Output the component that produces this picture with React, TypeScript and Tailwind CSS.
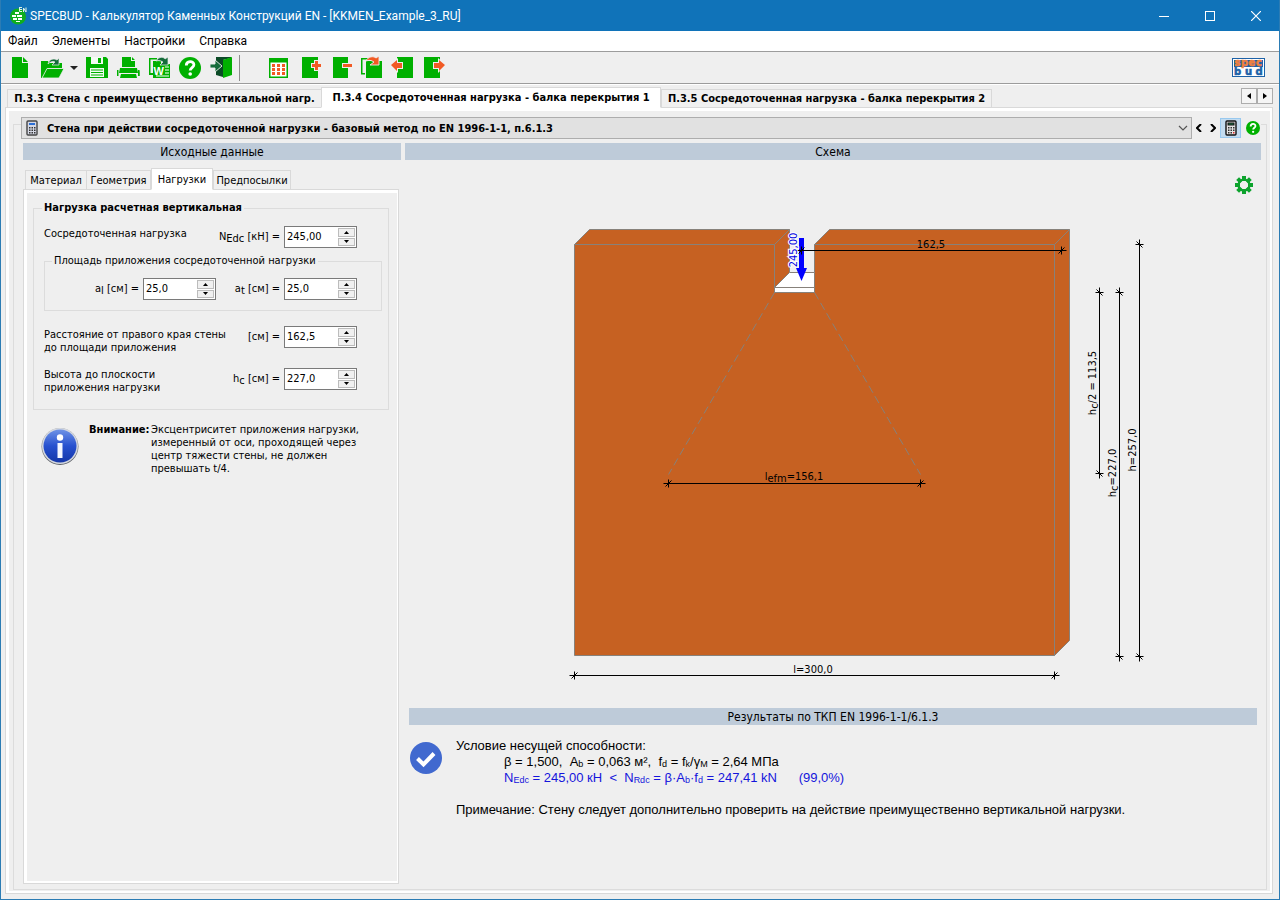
import type { ReactNode } from "react";
import { clsx } from "clsx";

const GREEN = "#00b000";
const DARK = "#156b3a";
const ORANGE = "#f15a24";

const menu = ["Файл", "Элементы", "Настройки", "Справка"];

function AppIcon() {
  return (
    <svg width="18" height="18" viewBox="0 0 18 18" aria-hidden="true">
      <circle cx="9" cy="9.500" r="8" fill="#0fae1e" />
      <path d="M6 5h4v2H6zM3 8h4v2H3zM8 8h5v2H8zM4 11h4v2H4zM9 11h4v2H9zM7 14h4v1H7z" fill="#fff" />
      <path d="M10 .5h3M10.500 .5v4H13M10 2.500h3M14.500 5V1l2.500 4V.5" stroke="#dff5e2" fill="none" />
    </svg>
  );
}

function ToolButton({ label, children }: { label: string; children: ReactNode }) {
  return (
    <button type="button" aria-label={label} className="h-6 w-[31px]">
      <svg width="31" height="24" viewBox="0 0 31 24">
        {children}
      </svg>
    </button>
  );
}

function Toolbar() {
  return (
    <div className="flex h-8 items-center border-b border-[#9c9c9c] pl-1 pr-[14px] shadow-[0_1px_0_#fff]">
      <ToolButton label="Новый">
        <path d="M7 1h10v6h6v15H7z" fill={GREEN} />
        <path d="M18 1l5 5h-5z" fill={GREEN} />
      </ToolButton>
      <ToolButton label="Открыть">
        <path d="M5 22V5h7l1 2h13v5H12L6 22z" fill={GREEN} />
        <path d="M11 12.500h17l-5 9.500H6z" fill={GREEN} stroke="#efefef" strokeWidth="0.8" />
        <path d="M12 8c1-5 6-6 9-4l2-2v7h-7l3-3c-3-1-5 0-7 2z" fill={DARK} stroke="#efefef" strokeWidth="0.7" />
      </ToolButton>
      <button type="button" aria-label="Последние файлы" className="h-6 w-[14px]">
        <svg width="14" height="24" viewBox="0 0 14 24">
          <path d="M3 10h8l-4 4z" fill="#222" />
        </svg>
      </button>
      <ToolButton label="Сохранить">
        <path d="M5 1h20l2 2v19H5z" fill={GREEN} />
        <path d="M10 1h12v7H10zM9 12h14v9H9z" fill="#f4fbf4" />
        <path d="M17 2h3v5h-3zM10 13.500h12v1H10zM10 16h12v1H10zM10 18.500h12v1H10z" fill={GREEN} />
      </ToolButton>
      <ToolButton label="Печать">
        <path d="M10 1h9v4h4v6H10zM20 1l3 3h-3z" fill={GREEN} />
        <path d="M8 12h17l1 5H7z" fill={GREEN} />
        <path d="M5 14l1 6H5zM27.500 14l-1.500 6h1.500zM9 18h15l1 4H8z" fill={GREEN} />
        <path d="M5 14h1.500v6H5zM26 14h1.500v6H26z" fill={GREEN} />
      </ToolButton>
      <ToolButton label="Экспорт в Word">
        <path d="M6 2h8v1.500H7.500V17H10v2H6z" fill={GREEN} />
        <path d="M10 5h8v3h9v14H10z" fill={GREEN} />
        <text x="10.500" y="18.500" fontSize="11" fontWeight="700" fontFamily="Liberation Sans, sans-serif" fill="#fff">W</text>
        <path d="M22 11h4M22 14h4M22 17h4M13 20h13" stroke="#fff" />
        <path d="M13 5c3-5 8-4 9-2l3-2v8h-8l3-3c-2-1-4-2-7-1z" fill={DARK} stroke="#efefef" strokeWidth="0.7" />
      </ToolButton>
      <ToolButton label="Помощь">
        <circle cx="16" cy="12" r="11" fill={GREEN} />
        <path d="M12.300 9.500c0-5 7.600-5 7.600-.7 0 2.700-3.700 2.900-3.700 5.700" fill="none" stroke="#fff" strokeWidth="2.800" />
        <circle cx="16.200" cy="18" r="1.800" fill="#fff" />
      </ToolButton>
      <ToolButton label="Выход">
        <path d="M11 1h15v1l-8 2v17l-7-2z" fill="#0b4a26" />
        <path d="M18 4l9-3v18l-9 3z" fill={GREEN} />
        <path d="M5 8h5V4l7 6-7 6v-4H5z" fill={DARK} stroke="#efefef" strokeWidth="0.9" />
      </ToolButton>
      <div className="ml-[3px] mr-[23px] h-[26px] w-px bg-[#8c8c8c]" />
      <ToolButton label="Таблица">
        <path d="M6 2h19v20H6z" fill={GREEN} />
        <path d="M7.500 6.500h16v14h-16z" fill="#fff" />
        <path d="M9 8h3v3H9zM14 8h3v3h-3zM19 8h3v3h-3zM9 12h3v3H9zM14 12h3v3h-3zM19 12h3v3h-3zM9 16h3v3H9zM14 16h3v3h-3zM19 16h3v3h-3z" fill={ORANGE} />
      </ToolButton>
      <ToolButton label="Добавить элемент">
        <path d="M8 1h16v21H8z" fill={GREEN} />
        <path d="M17 7h3V4h5v3h3v5h-3v3h-5v-3h-3z" fill="#efefef" />
        <path d="M18 8h3V5h3v3h3v3h-3v3h-3v-3h-3z" fill={ORANGE} />
      </ToolButton>
      <ToolButton label="Удалить элемент">
        <path d="M8 1h15v21H8z" fill={GREEN} />
        <path d="M17 7h11v5H17z" fill="#efefef" />
        <path d="M18 8h9v3h-9z" fill={ORANGE} />
      </ToolButton>
      <ToolButton label="Копировать элемент">
        <path d="M5 2h8v1.500H6.500V17H9v1.500H5z" fill={GREEN} />
        <path d="M10 5h16v17H10z" fill={GREEN} />
        <path d="M10 5c2-5 8-5 10-3l3-2v9h-9l4-3c-3-2-5-2-8-1z" fill={ORANGE} stroke="#efefef" strokeWidth="0.9" />
      </ToolButton>
      <ToolButton label="Переместить влево">
        <path d="M10 1h16v21H10z" fill={GREEN} />
        <path d="M3 9l8-7v4h5v7h-5v4z" fill="#efefef" />
        <path d="M4 9l6-5v3h5v5h-5v3z" fill={ORANGE} />
      </ToolButton>
      <ToolButton label="Переместить вправо">
        <path d="M6 1h16v21H6z" fill={GREEN} />
        <path d="M28 9l-8-7v4h-5v7h5v4z" fill="#efefef" />
        <path d="M27 9l-6-5v3h-5v5h5v3z" fill={ORANGE} />
      </ToolButton>
      <svg className="ml-auto" width="33" height="19" viewBox="0 0 33 19" role="img" aria-label="specbud">
        <rect x="0.500" y="0.500" width="32" height="18" fill="#fff" stroke="#1d62a8" />
        <rect x="2" y="2" width="29" height="7" fill="#1d62a8" />
        <g fontFamily="DejaVu Sans, sans-serif" fontWeight="700" textAnchor="middle" strokeWidth="0.6">
          <g fontSize="10" fill="#f08040" stroke="#f08040">
            <text x="5.500" y="8">s</text>
            <text x="12.500" y="8">p</text>
            <text x="20" y="8">e</text>
            <text x="27" y="8">c</text>
          </g>
          <g fontSize="10" fill="#1d62a8" stroke="#1d62a8">
            <text x="5.500" y="17">b</text>
            <text x="16.500" y="17">u</text>
            <text x="27" y="17">d</text>
          </g>
        </g>
      </svg>
    </div>
  );
}

function Calculator({ color }: { color?: boolean }) {
  return (
    <svg width="12" height="16" viewBox="0 0 12 16" aria-hidden="true">
      <rect x="1" y="1" width="10" height="14" rx="1" fill={color ? "#d5d8e4" : "#e4e4e4"} stroke={color ? "#444" : "#111"} strokeWidth="1.400" />
      <rect x="3" y="3" width="6" height="2" fill={color ? "#2b6fd6" : "#1f7a4a"} stroke={color ? "none" : "#111"} />
      <path d="M3 7h1.500v1.500H3zM5.500 7H7v1.500H5.500zM8 7h1.500v1.500H8zM3 9.500h1.500V11H3zM5.500 9.500H7V11H5.500zM8 9.500h1.500V11H8zM3 12h1.500v1.500H3zM5.500 12H7v1.500H5.500z" fill="#333" />
      <path d="M8 12h1.500v1.500H8z" fill={color ? "#333" : "#e03030"} />
    </svg>
  );
}

function Heading({ children }: { children: ReactNode }) {
  return <h2 className="h-[17px] bg-[#becbd9] text-center text-[12px] leading-[18px]">{children}</h2>;
}

function Sub({ children }: { children: ReactNode }) {
  return <span className="relative top-0.5">{children}</span>;
}

interface NumberFieldProps {
  id: string;
  symbol: ReactNode;
  value: string;
}

function NumberField({ id, symbol, value }: NumberFieldProps) {
  return (
    <div className="flex h-[22px] w-[141px] shrink-0 items-center justify-end gap-1">
      <label htmlFor={id} className="whitespace-nowrap">
        {symbol} =
      </label>
      <div className="flex h-[22px] w-[73px] border border-[#7a7a7a] bg-white p-px">
        <input id={id} defaultValue={value} className="w-0 flex-1 bg-transparent px-px outline-none" />
        <div className="flex w-[17px] flex-col gap-px">
          <button type="button" aria-label="Больше" className="flex flex-1 items-center justify-center border border-[#bcbcbc] bg-[#f0f0f0]">
            <svg width="5" height="3" viewBox="0 0 5 3"><path d="M0 3l2.500-3L5 3z" /></svg>
          </button>
          <button type="button" aria-label="Меньше" className="flex flex-1 items-center justify-center border border-[#bcbcbc] bg-[#f0f0f0]">
            <svg width="5" height="3" viewBox="0 0 5 3"><path d="M0 0h5L2.500 3z" /></svg>
          </button>
        </div>
      </div>
    </div>
  );
}

function InfoIcon() {
  return (
    <svg width="40" height="40" viewBox="0 0 40 40" className="shrink-0" aria-hidden="true">
      <defs>
        <linearGradient id="info" x1="0" y1="0" x2="0" y2="1">
          <stop offset="0" stopColor="#6f93e6" />
          <stop offset="0.500" stopColor="#2650cf" />
          <stop offset="1" stopColor="#1436a8" />
        </linearGradient>
        <linearGradient id="ring" x1="0" y1="0" x2="0" y2="1">
          <stop offset="0" stopColor="#9c9c9c" />
          <stop offset="1" stopColor="#5c6066" />
        </linearGradient>
      </defs>
      <circle cx="20" cy="20.500" r="18.500" fill="url(#ring)" />
      <circle cx="20" cy="20" r="18" fill="#d4d8e0" />
      <circle cx="20" cy="20" r="16.500" fill="url(#info)" />
      <circle cx="20" cy="11.500" r="3.200" fill="#fff" />
      <path d="M17.500 17h5v15h-5z" fill="#f4f6ff" />
    </svg>
  );
}

const tabs = ["Материал", "Геометрия", "Нагрузки", "Предпосылки"];
const tabWidths = ["w-[61px]", "w-[65px]", "w-[62px]", "w-[78px]"];

function InputPanel() {
  return (
    <section className="flex w-[378px] shrink-0 flex-col">
      <Heading>Исходные данные</Heading>
      <div role="tablist" className="flex h-[29px] items-end pl-0.5">
        {tabs.map((tab, i) => (
          <button
            key={tab}
            type="button"
            role="tab"
            aria-selected={i === 2}
            className={clsx(
              "flex shrink-0 justify-center border border-[#d9d9d9] whitespace-nowrap",
              tabWidths[i],
              i === 2 ? "relative -mb-px h-[22px] border-b-white bg-white pt-[3px]" : "h-[19px] border-b-0 bg-[#f0f0f0] pt-0.5",
              i === 0 && "border-r-0",
            )}
          >
            {tab}
          </button>
        ))}
      </div>
      <div role="tabpanel" className="mr-[2px] flex-1 border border-[#d9d9d9] bg-white pt-[3px] pr-px pb-[2px] pl-[3px]">
        <div className="h-full bg-[#efefef] pt-[7px] pr-2 pl-1.5">
          <fieldset className="border border-[#dcdcdc] pr-1.5 pb-[13px] pl-2.5">
            <legend className="-ml-0.5 px-0.5 text-[11px] leading-4 font-bold">Нагрузка расчетная вертикальная</legend>
            <div className="mt-[10px] flex items-start justify-between pr-[25px]">
              <span>Сосредоточенная нагрузка</span>
              <NumberField id="nedc" symbol={<>N<Sub>Edc</Sub> [кН]</>} value="245,00" />
            </div>
            <fieldset className="mt-[5px] border border-[#dcdcdc] pr-6 pb-[10px]">
              <legend className="ml-[7px] px-0.5 leading-4">Площадь приложения сосредоточенной нагрузки</legend>
              <div className="mt-[9px] flex justify-end">
                <NumberField id="al" symbol={<>a<Sub>l</Sub> [см]</>} value="25,0" />
                <NumberField id="at" symbol={<>a<Sub>t</Sub> [см]</>} value="25,0" />
              </div>
            </fieldset>
            <div className="mt-[15px] flex h-7 items-start justify-between pr-[25px]">
              <span className="pt-0.5 leading-[13px] whitespace-nowrap">
                Расстояние от правого края стены
                <br />
                до площади приложения
              </span>
              <div className="flex w-0 justify-end">
                <NumberField id="dist" symbol="[см]" value="162,5" />
              </div>
            </div>
            <div className="mt-[14px] flex h-7 items-start justify-between pr-[25px]">
              <span className="leading-[13px] whitespace-nowrap">
                Высота до плоскости
                <br />
                приложения нагрузки
              </span>
              <NumberField id="hc" symbol={<>h<Sub>c</Sub> [см]</>} value="227,0" />
            </div>
          </fieldset>
          <div className="flex items-start pt-[13px] pl-[7px] leading-[13px]">
            <div className="pt-[3px]">
              <InfoIcon />
            </div>
            <p className="ml-[9px] w-[62px] shrink-0 font-bold">Внимание:</p>
            <p className="whitespace-nowrap">
              Эксцентриситет приложения нагрузки,
              <br />
              измеренный от оси, проходящей через
              <br />
              центр тяжести стены, не должен
              <br />
              превышать t/4.
            </p>
          </div>
        </div>
      </div>
    </section>
  );
}

// Dimension end mark: a cross with an oblique stroke
function Tick({ x, y, vertical }: { x: number; y: number; vertical?: boolean }) {
  return (
    <path
      d={vertical ? `M${x - 4} ${y}h8M${x} ${y - 5}v10M${x - 3} ${y - 3}l6 6` : `M${x - 5} ${y}h10M${x} ${y - 4}v8M${x - 3} ${y + 3}l6 -6`}
      stroke="#000"
      fill="none"
    />
  );
}

function HDim({ x1, x2, y }: { x1: number; x2: number; y: number }) {
  return (
    <g>
      <path d={`M${x1} ${y}H${x2}`} stroke="#000" />
      <Tick x={x1} y={y} />
      <Tick x={x2} y={y} />
    </g>
  );
}

function VDim({ x, y1, y2 }: { x: number; y1: number; y2: number }) {
  return (
    <g>
      <path d={`M${x} ${y1}V${y2}`} stroke="#000" />
      <Tick x={x} y={y1} vertical />
      <Tick x={x} y={y2} vertical />
    </g>
  );
}

function Scheme() {
  return (
    <svg viewBox="405 160 856 548" className="block w-full" fontSize="11" role="img" aria-label="Схема">
      <g stroke="#87817a">
        <path d="M574.500 244.500l15-15h200v43l-15 15v5h40v-48l15-15h240v411l-15 15h-480z" fill="#c66122" />
        <path d="M774.500 287.500l15-15h25v20h-40z" fill="#fff" />
        <path d="M774.500 287.500h40M574.500 244.500h200v43M774.500 244.500l15-15M814.500 244.500h240v411M1054.500 244.500l15-15" fill="none" />
        <path d="M774.500 292.500l-106 182M814.500 292.500l106 182" fill="none" strokeDasharray="8 4" />
      </g>
      <path d="M799 238h5v30h3l-5.500 13-5.500-13h3z" fill="#00f" />
      <HDim x1={801.5} x2={1061.5} y={250.5} />
      <HDim x1={668.5} x2={920.5} y={483.5} />
      <HDim x1={574.5} x2={1054.5} y={675.5} />
      <VDim x={1099.5} y1={292.5} y2={473.5} />
      <VDim x={1119.5} y1={292.5} y2={656.5} />
      <VDim x={1139.5} y1={244.5} y2={656.5} />
      <g textAnchor="middle">
        <text x="931" y="248">162,5</text>
        <text x="794" y="480">
          l<tspan dy="2">efm</tspan>
          <tspan dy="-2">=156,1</tspan>
        </text>
        <text x="813" y="673">l=300,0</text>
        <text transform="translate(797 250) rotate(-90)" fill="#0000e0" stroke="#fff" strokeWidth="2" paintOrder="stroke">245,00</text>
        <text transform="translate(1096 383) rotate(-90)">
          h<tspan dy="2">c</tspan>
          <tspan dy="-2">/2 = 113,5</tspan>
        </text>
        <text transform="translate(1116 473) rotate(-90)">
          h<tspan dy="2">c</tspan>
          <tspan dy="-2">=227,0</tspan>
        </text>
        <text transform="translate(1136 450) rotate(-90)">h=257,0</text>
      </g>
    </svg>
  );
}

function ResultSub({ children }: { children: ReactNode }) {
  return <sub className="bottom-[-1px] text-[9px]">{children}</sub>;
}

function Results() {
  return (
    <section className="px-1">
      <Heading>Результаты по ТКП EN 1996-1-1/6.1.3</Heading>
      <div className="flex items-start gap-[14px] pt-[13px] pl-px font-['Liberation_Sans',sans-serif] text-[13px] leading-4">
        <svg width="32" height="32" viewBox="0 0 32 32" className="mt-1 shrink-0" aria-hidden="true">
          <circle cx="16" cy="16" r="16" fill="#4169cf" />
          <path d="M7.500 16.500l6 6L24 11.500" fill="none" stroke="#fff" strokeWidth="4" />
        </svg>
        <div>
          <p>Условие несущей способности:</p>
          <p className="pl-12 whitespace-pre">
            β = 1,500,{"  "}A<ResultSub>b</ResultSub> = 0,063 м²,{"  "}f<ResultSub>d</ResultSub> = f<ResultSub>k</ResultSub>/γ
            <ResultSub>M</ResultSub> = 2,64 МПа
          </p>
          <p className="pl-12 whitespace-pre text-[#1414dc]">
            N<ResultSub>Edc</ResultSub> = 245,00 кН{"  "}&lt;{"  "}N<ResultSub>Rdc</ResultSub> = β·A<ResultSub>b</ResultSub>·f
            <ResultSub>d</ResultSub> = 247,41 kN{"     "} (99,0%)
          </p>
          <p className="mt-4">Примечание: Стену следует дополнительно проверить на действие преимущественно вертикальной нагрузки.</p>
        </div>
      </div>
    </section>
  );
}

function GearIcon() {
  return (
    <svg width="18" height="18" viewBox="0 0 18 18" aria-hidden="true">
      {[0, 45, 90, 135, 180, 225, 270, 315].map((a) => (
        <rect key={a} x="7" y="0" width="4" height="5" fill="#0da32d" transform={`rotate(${a} 9 9)`} />
      ))}
      <circle cx="9" cy="9" r="5.500" fill="none" stroke="#0da32d" strokeWidth="2.200" />
    </svg>
  );
}

const docTabs = [
  { title: "П.3.3 Стена с преимущественно вертикальной нагр.", width: "w-[314px]" },
  { title: "П.3.4 Сосредоточенная нагрузка - балка перекрытия 1", width: "w-[340px]" },
  { title: "П.3.5 Сосредоточенная нагрузка - балка перекрытия 2", width: "w-[331px]" },
];

export default function App() {
  return (
    <div className="flex min-h-screen flex-col border-x border-b border-[#2c7cb4] bg-[#efefef] font-['DejaVu_Sans_Condensed','DejaVu_Sans',sans-serif] text-[11px] leading-4 text-black">
      <header className="flex h-[31px] items-center bg-[#1073b9] pl-2 font-['Roboto',sans-serif] text-[12px] text-white">
        <AppIcon />
        <h1 className="ml-[3px] flex-1">SPECBUD - Калькулятор Каменных Конструкций EN - [KKMEN_Example_3_RU]</h1>
        <button type="button" aria-label="Свернуть" className="flex w-[46px] justify-center">
          <svg width="10" height="10"><path d="M0 5.500h10" stroke="#fff" /></svg>
        </button>
        <button type="button" aria-label="Развернуть" className="flex w-[46px] justify-center">
          <svg width="10" height="10"><rect x="0.500" y="0.500" width="9" height="9" fill="none" stroke="#fff" /></svg>
        </button>
        <button type="button" aria-label="Закрыть" className="flex w-[46px] justify-center">
          <svg width="10" height="10"><path d="M0 0l10 10M10 0L0 10" stroke="#fff" strokeWidth="1.200" /></svg>
        </button>
      </header>
      <nav className="flex h-[21px] items-center gap-[14px] border-b border-[#9c9c9c] bg-white pl-[7px] font-['Roboto',sans-serif] text-[12px]">
        {menu.map((m) => (
          <button key={m} type="button">{m}</button>
        ))}
      </nav>
      <Toolbar />

      <div className="flex flex-1 flex-col pt-[3px] pr-[6px] pb-[5px] pl-1">
        <div className="flex items-end pl-0.5">
          <div role="tablist" className="flex flex-1 items-end font-bold">
            {docTabs.map((t, i) => (
              <button
                key={t.title}
                type="button"
                role="tab"
                aria-selected={i === 1}
                className={clsx(
                  "border border-[#d9d9d9] whitespace-nowrap",
                  t.width,
                  i === 0 && "border-r-0",
                  i === 1 ? "relative -mb-px h-[21px] border-b-white bg-white" : "h-[18px] border-b-0 bg-[#f0f0f0]",
                )}
              >
                {t.title}
              </button>
            ))}
          </div>
          <div className="mb-[3px] flex">
            <button type="button" aria-label="Предыдущая вкладка" className="flex h-4 w-4 items-center justify-center border border-[#adadad] bg-[#f5f5f5]">
              <svg width="4" height="6"><path d="M4 0v6L0 3z" /></svg>
            </button>
            <button type="button" aria-label="Следующая вкладка" className="flex h-4 w-4 items-center justify-center border border-[#adadad] bg-[#f5f5f5]">
              <svg width="4" height="6"><path d="M0 0v6l4-3z" /></svg>
            </button>
          </div>
        </div>

        <main className="flex flex-1 flex-col border border-[#d9d9d9] bg-white pt-[3px] pr-[2px] pb-[2px] pl-[3px]">
          <div className="flex flex-1 flex-col bg-[#efefef] pr-[3px] pb-px pl-1">
            <div className="flex flex-1 flex-col pt-[13px]">
              <div className="flex flex-1 flex-col border border-[#dcdcdc] pr-[5px] pb-[5px] pl-2">
                <div className="-mt-2 flex h-[22px] items-center bg-[#efefef]">
                  <div className="relative -ml-px h-[22px] flex-1">
                    <span className="absolute top-[3px] left-[5px]">
                      <Calculator color />
                    </span>
                    <select aria-label="Метод расчета" className="block h-[22px] w-full appearance-none border border-[#adadad] bg-[#e1e1e1] pt-px pl-[25px] font-bold">
                      <option>Стена при действии сосредоточенной нагрузки - базовый метод по EN 1996-1-1, п.6.1.3</option>
                    </select>
                    <svg width="10" height="6" viewBox="0 0 10 6" className="pointer-events-none absolute top-[8px] right-[4px]">
                      <path d="M1 1l4 4 4-4" fill="none" stroke="#555" strokeWidth="1.200" />
                    </svg>
                  </div>
                  <button type="button" aria-label="Назад" className="flex w-[14px] justify-center">
                    <svg width="6" height="8"><path d="M5 0L1 4l4 4" fill="none" stroke="#000" strokeWidth="2" /></svg>
                  </button>
                  <button type="button" aria-label="Вперед" className="flex w-[14px] justify-center">
                    <svg width="6" height="8"><path d="M1 0l4 4-4 4" fill="none" stroke="#000" strokeWidth="2" /></svg>
                  </button>
                  <button type="button" aria-label="Калькулятор" className="flex h-5 w-[21px] items-center justify-center border border-[#99c9ef] bg-[#c3dcf0]">
                    <Calculator />
                  </button>
                  <button type="button" aria-label="Справка по методу" className="ml-1 flex w-4 justify-center">
                    <svg width="14" height="14" viewBox="0 0 22 22">
                      <circle cx="11" cy="11" r="11" fill={GREEN} />
                      <path d="M7.300 8.500c0-5 7.600-5 7.600-.7 0 2.700-3.700 2.900-3.700 5.700" fill="none" stroke="#fff" strokeWidth="2.800" />
                      <circle cx="11.200" cy="17" r="1.800" fill="#fff" />
                    </svg>
                  </button>
                </div>
                <div className="flex flex-1 gap-1 pt-1 pl-px">
                  <InputPanel />
                  <section className="relative flex-1">
                    <Heading>Схема</Heading>
                    <button type="button" aria-label="Настройки схемы" className="absolute top-[33px] right-2">
                      <GearIcon />
                    </button>
                    <Scheme />
                    <Results />
                  </section>
                </div>
              </div>
            </div>
          </div>
        </main>
      </div>
    </div>
  );
}
